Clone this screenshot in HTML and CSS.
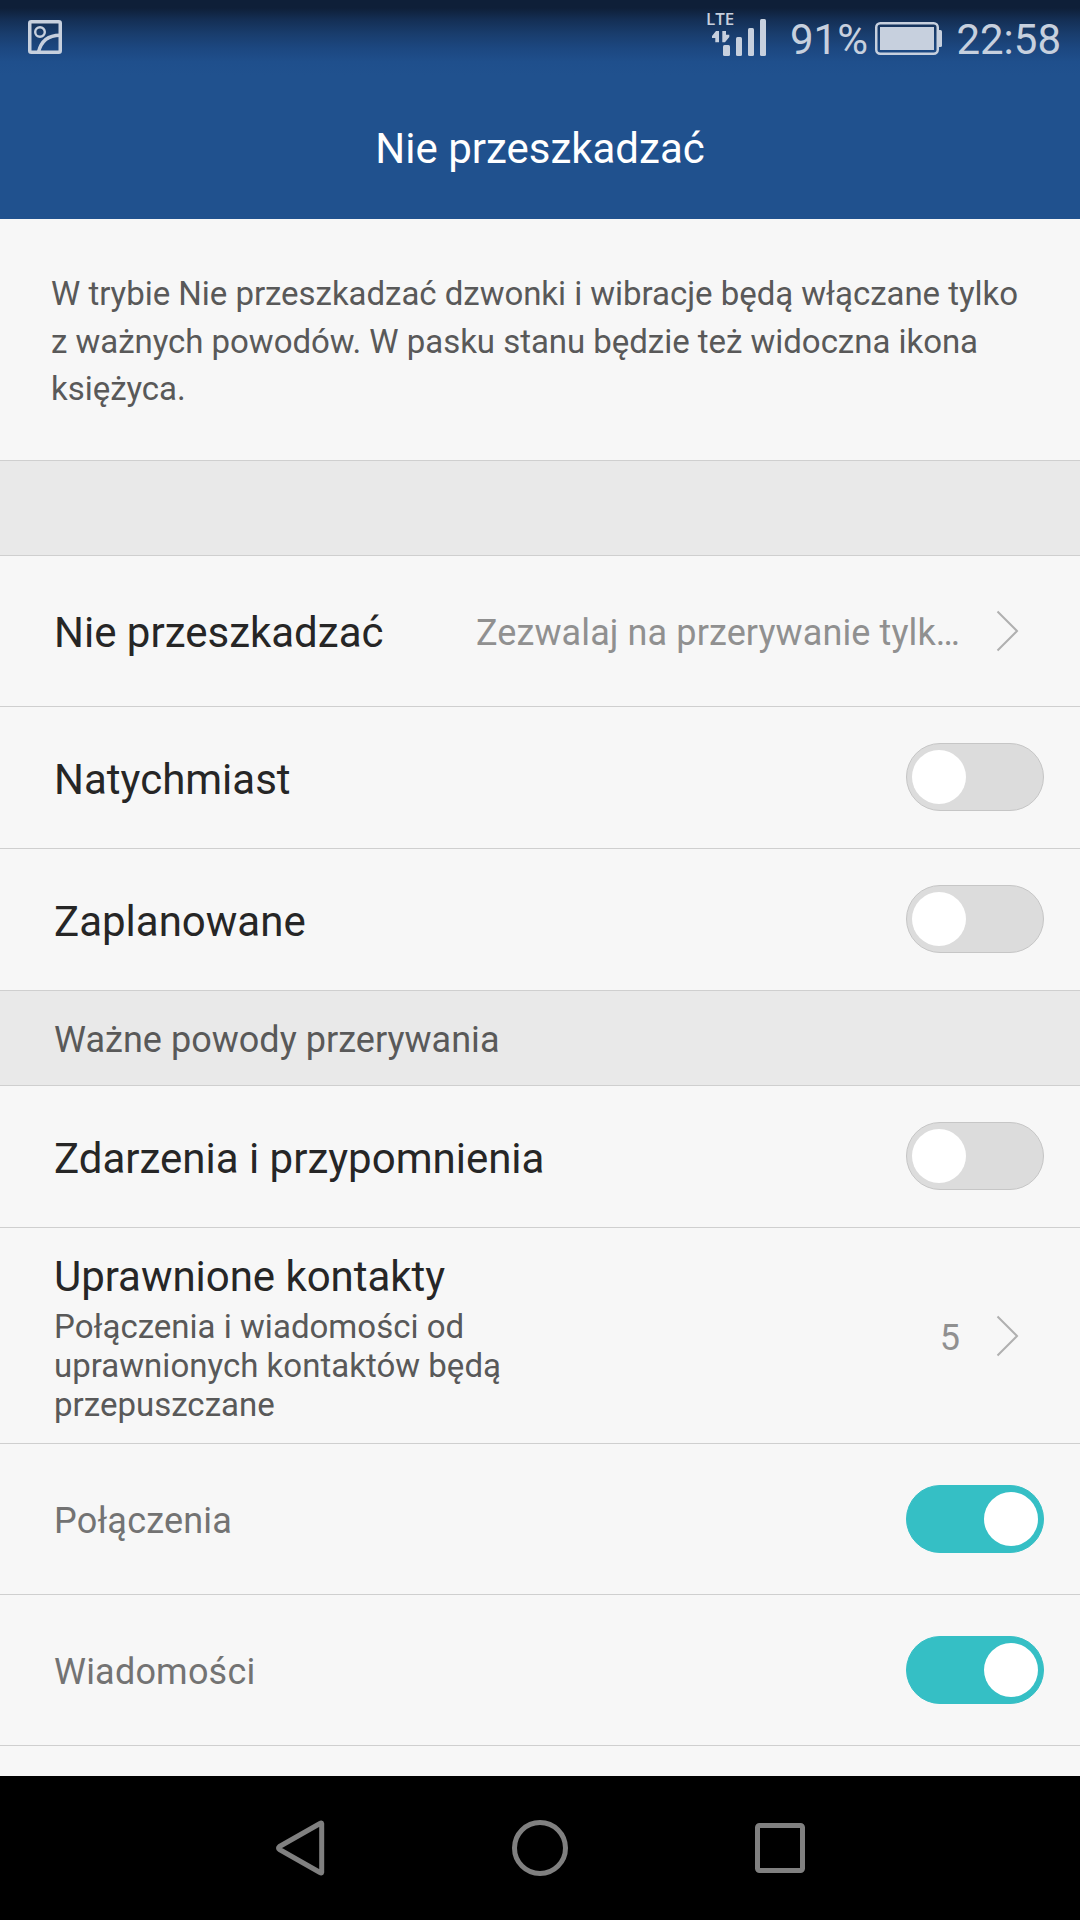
FILE: index.html
```html
<!DOCTYPE html>
<html lang="pl">
<head>
<meta charset="utf-8">
<title>Nie przeszkadzać</title>
<link rel="stylesheet" href="styles.css">
</head>
<body>
<div class="screen">
  <header class="header">
    <div class="status">
      <svg class="status-picture" width="34" height="34" viewBox="0 0 34 34" fill="none" stroke="currentColor">
        <rect x="1.750" y="1.750" width="30.500" height="30.500" rx="1.500" stroke-width="3.500"/>
        <circle cx="12" cy="12" r="4.800" stroke-width="2.400"/>
        <path d="M10.500 32C13 21.500 20 15.200 32 15.200" stroke-width="3.500"/>
      </svg>
      <div class="status-right">
        <svg class="status-signal" width="66" height="56" viewBox="-6 -12 66 56" fill="currentColor">
          <text class="lte" x="-1" y="13">LTE</text>
          <path d="M5 24L9 19H12V30.300H8.300V26H5Z"/>
          <path d="M15.300 19H19V22.700H22.300V25L18 30.300H15.300Z"/>
          <rect x="16" y="33" width="7" height="11" rx="1.500"/>
          <rect x="29" y="25" width="6" height="19" rx="1.500"/>
          <rect x="41" y="16" width="6" height="28" rx="1.500"/>
          <rect x="53" y="7" width="6" height="37" rx="1.500"/>
        </svg>
        <span class="status-text percent">91%</span>
        <svg class="status-battery" width="67" height="33" viewBox="0 0 67 33">
          <rect x="1.250" y="1.250" width="61.500" height="30.500" rx="4" fill="none" stroke="currentColor" stroke-width="2.500"/>
          <rect x="5" y="5" width="54" height="23" fill="currentColor"/>
          <path d="M64 8h1.500q1.500 0 1.500 1.500v14q0 1.500-1.500 1.500H64z" fill="currentColor"/>
        </svg>
        <span class="status-text clock">22:58</span>
      </div>
    </div>
    <h1 class="title">Nie przeszkadzać</h1>
  </header>

  <main class="content">
    <p class="intro">W trybie Nie przeszkadzać dzwonki i wibracje będą włączane tylko z ważnych powodów. W pasku stanu będzie też widoczna ikona księżyca.</p>
    <div class="section"></div>

    <div class="row row-tall">
      <span class="label">Nie przeszkadzać</span>
      <span class="value">Zezwalaj na przerywanie tylk…</span>
      <svg class="chevron" width="23" height="42" viewBox="0 0 23 42"><path d="M1.500 1.500L21 21L1.500 40.500"/></svg>
    </div>
    <div class="row">
      <span class="label">Natychmiast</span>
      <span class="toggle"></span>
    </div>
    <div class="row">
      <span class="label">Zaplanowane</span>
      <span class="toggle"></span>
    </div>

    <h2 class="section">Ważne powody przerywania</h2>

    <div class="row">
      <span class="label">Zdarzenia i przypomnienia</span>
      <span class="toggle"></span>
    </div>
    <div class="row row-contacts">
      <div class="contacts">
        <span class="contacts-title">Uprawnione kontakty</span>
        <span class="contacts-note">Połączenia i wiadomości od uprawnionych kontaktów będą przepuszczane</span>
      </div>
      <span class="value count">5</span>
      <svg class="chevron" width="23" height="42" viewBox="0 0 23 42"><path d="M1.500 1.500L21 21L1.500 40.500"/></svg>
    </div>
    <div class="row row-tall">
      <span class="label label-minor">Połączenia</span>
      <span class="toggle toggle-on"></span>
    </div>
    <div class="row row-tall">
      <span class="label label-minor">Wiadomości</span>
      <span class="toggle toggle-on"></span>
    </div>
  </main>

  <nav class="navbar">
    <svg width="60" height="60" viewBox="0 0 60 60"><path d="M51.700 5.700V54.300Q51.500 55.500 50 54.500L9.500 31.500Q7.500 30 9.500 28.500L50 5.500Q51.500 4.500 51.700 5.700Z"/></svg>
    <svg width="60" height="60" viewBox="0 0 60 60"><circle cx="30" cy="30" r="25.500"/></svg>
    <svg width="60" height="60" viewBox="0 0 60 60"><rect x="7.500" y="7.500" width="45" height="45" rx="2"/></svg>
  </nav>
</div>
</body>
</html>
```
FILE: styles.css
```css
* {
  box-sizing: border-box;
}

body {
  margin: 0;
  font-family: Roboto, sans-serif;
}

.screen {
  width: 1080px;
  height: 1920px;
  display: flex;
  flex-direction: column;
  overflow: hidden;
  background: #f7f7f7;
}

.header {
  height: 219px;
  flex: none;
  background: linear-gradient(#0e1f38 0, #0e1f38 8px, #142f55 20px, #193d6d 34px, #1c4780 48px, #1f4f8c 62px, #20518e 75px);
}

.status {
  height: 78px;
  padding: 0 19px 0 28px;
  display: flex;
  justify-content: space-between;
  align-items: flex-start;
  color: #c7d0de;
}

.status-picture {
  margin-top: 20px;
}

.status-right {
  display: flex;
  align-items: flex-start;
}

.lte {
  font: 600 17px "Open Sans", sans-serif;
}

.status-text {
  font-size: 42px;
  line-height: 50px;
  margin-top: 15px;
}

.percent {
  width: 84px;
  text-align: right;
  margin: 15px 0 0 17px;
}

.status-battery {
  margin: 22px 0 0 7px;
}

.clock {
  width: 119px;
  text-align: right;
}

.title {
  margin: 0;
  text-align: center;
  font-size: 42px;
  font-weight: 400;
  line-height: 141px;
  color: #fff;
}

.content {
  flex: 1;
}

.intro {
  margin: 0;
  height: 242px;
  padding: 51px 50px 0 51px;
  font-size: 33px;
  line-height: 47.500px;
  letter-spacing: -0.035px;
  color: #595959;
  border-bottom: 1px solid #cfcfcf;
}

.section {
  margin: 0;
  height: 95px;
  padding: 4px 54px 0;
  font-size: 36px;
  font-weight: 400;
  line-height: 91px;
  letter-spacing: 0.030px;
  color: #595959;
  background: #e9e9e9;
  border-bottom: 1px solid #cfcfcf;
}

.row {
  height: 142px;
  padding: 0 36px 0 54px;
  display: flex;
  align-items: center;
  border-bottom: 1px solid #cfcfcf;
}

.row-tall {
  height: 151px;
}

.row-contacts {
  height: 216px;
}

.label {
  flex: 1;
  padding-top: 3px;
  font-size: 42px;
  white-space: nowrap;
  color: #262626;
}

.label-minor {
  font-size: 36px;
  letter-spacing: 0.200px;
  color: #737373;
}

.value {
  padding-top: 3px;
  font-size: 36px;
  letter-spacing: 0.110px;
  white-space: nowrap;
  color: #909090;
}

.count {
  padding-top: 5px;
}

.chevron {
  margin: 0 25px 0 36px;
  fill: none;
  stroke: #b0b0b0;
  stroke-width: 2;
}

.contacts {
  flex: 1;
  align-self: flex-start;
  padding-top: 24px;
  display: flex;
  flex-direction: column;
  gap: 6px;
}

.contacts-title {
  font-size: 42px;
  line-height: 49px;
  letter-spacing: -0.040px;
  color: #262626;
}

.contacts-note {
  width: 460px;
  font-size: 33px;
  line-height: 39px;
  letter-spacing: 0.020px;
  color: #595959;
}

.toggle {
  width: 138px;
  height: 68px;
  margin-bottom: 1px;
  padding: 6px 5px;
  display: flex;
  border: 1px solid #c6c6c6;
  border-radius: 34px;
  background: #dcdcdc;
}

.toggle::before {
  content: "";
  width: 54px;
  height: 54px;
  border-radius: 50%;
  background: #fff;
}

.toggle-on {
  margin-bottom: 0;
  justify-content: flex-end;
  border-color: #35bfc5;
  background: #35bfc5;
}

.navbar {
  height: 144px;
  flex: none;
  display: flex;
  justify-content: center;
  align-items: center;
  gap: 180px;
  background: #000;
}

.navbar svg {
  fill: none;
  stroke: #808080;
  stroke-width: 5;
  stroke-linejoin: round;
}
```
